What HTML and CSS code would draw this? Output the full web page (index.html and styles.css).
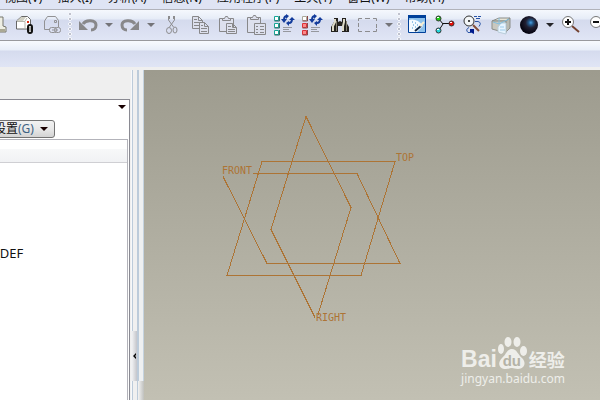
FILE: index.html
```html
<!DOCTYPE html>
<html lang="zh-CN">
<head>
<meta charset="utf-8">
<meta name="viewport" content="width=device-width, initial-scale=1">
<title>Datum planes</title>
<link rel="stylesheet" href="styles.css">
</head>
<body>
<nav class="menubar">
  <button type="button">视图(V)</button>
  <button type="button">插入(I)</button>
  <button type="button">分析(A)</button>
  <button type="button">信息(N)</button>
  <button type="button">应用程序(P)</button>
  <button type="button">工具(T)</button>
  <button type="button">窗口(W)</button>
  <button type="button">帮助(H)</button>
</nav>

<div class="toolbar" role="toolbar">
  <button type="button" class="tool" aria-label="打印">
    <svg viewBox="0 0 28 28"><path d="M10 15V6h10v9l3 1v5H8v-5z" fill="#eeeee4" stroke="#77776c"/><path d="M10 18h12v3H10z" fill="#aaa894"/></svg>
  </button>
  <button type="button" class="tool" aria-label="邮件">
    <svg viewBox="0 0 28 28"><path d="M5.500 10l5-4.500h6l3 3V18h-14z" fill="#fff" stroke="#666"/><path d="M6 10l4-4h5l-3 4z" fill="#d0d0c4"/><path d="M6 10.500h8V18M14 10l2-3" fill="none" stroke="#b5b5ac"/><path d="M16 10h2v2h-2z" fill="#d83018"/><rect x="17" y="14" width="4" height="8" rx="2" fill="#fff" stroke="#111" stroke-width="2"/><path d="M19 16v4" stroke="#555"/></svg>
  </button>
  <button type="button" class="tool" aria-label="链接">
    <svg viewBox="0 0 28 28" fill="none" stroke="#929294"><path d="M11 18.500H5.500V10l3-4.500h8l3 4V16M15.500 9.500h2v2h-2z"/><rect x="10.500" y="16.500" width="7" height="5" rx="2"/><rect x="15.500" y="16.500" width="6" height="5" rx="2"/><path d="M13 19h6"/></svg>
  </button>
  <span class="grip"></span>
  <button type="button" class="tool" aria-label="撤消">
    <svg viewBox="0 0 28 28"><path d="M9 13c3-5 13-4 13 1 0 3-2 5-5 5" fill="none" stroke="#88888a" stroke-width="3"/><path d="M5 10v9h9z" fill="#88888a"/></svg>
  </button>
  <button type="button" class="drop" aria-label="撤消列表"><svg viewBox="0 0 14 28"><path d="M3 12h8l-4 4z" fill="#747478"/></svg></button>
  <button type="button" class="tool" aria-label="重做">
    <svg viewBox="0 0 28 28"><path d="M19 13c-3-5-13-4-13 1 0 3 2 5 5 5" fill="none" stroke="#88888a" stroke-width="3"/><path d="M23 10v9h-9z" fill="#88888a"/></svg>
  </button>
  <button type="button" class="drop" aria-label="重做列表"><svg viewBox="0 0 14 28"><path d="M3 12h8l-4 4z" fill="#747478"/></svg></button>
  <button type="button" class="tool" aria-label="剪切">
    <svg viewBox="0 0 28 28" fill="none" stroke="#8c8c8e"><path d="M10.500 5v4l5 7M16.500 5v4l-5 7M11.500 5v3M15.500 5v3"/><ellipse cx="11" cy="19.500" rx="2.500" ry="3"/><ellipse cx="17" cy="19" rx="2" ry="3"/></svg>
  </button>
  <button type="button" class="tool" aria-label="复制">
    <svg viewBox="0 0 28 28" fill="#dde0ed" stroke="#88888a"><path d="M6.500 5.500h6l4 4v8h-10zM12.500 5.500v4h4M8 8.500h3M8 11.500h7M8 14.500h7"/><path d="M13.500 11.500h5l4 4v7h-9zM18.500 11.500v4h4M15 14.500h2M15 17.500h6M15 20.500h6"/></svg>
  </button>
  <button type="button" class="tool" aria-label="粘贴">
    <svg viewBox="0 0 28 28" fill="#dde0ed" stroke="#88888a"><path d="M5.500 7.500h14v13h-14z"/><path d="M8.500 9.500v-2h2l1-2h2l1 2h2v2z"/><path d="M12.500 12.500h6l4 4v6h-10zM18.500 12.500v4h4M14 15.500h3M14 18.500h7M14 20.500h7"/></svg>
  </button>
  <button type="button" class="tool" aria-label="选择性粘贴">
    <svg viewBox="0 0 28 28" fill="#dde0ed" stroke="#88888a"><path d="M5.500 6.500h13v15h-13z"/><path d="M8.500 8.500v-2h2l1-2h2l1 2h2v2z"/><path d="M12.500 12.500h11v11h-11z"/><path d="M14 15.500h2M18 15.500h4M14 18.500h2M18 18.500h4M14 21.500h2M18 21.500h4"/></svg>
  </button>
  <button type="button" class="tool" aria-label="再生">
    <svg viewBox="0 0 28 28"><g fill="#fff" stroke="#16a596"><path d="M4.500 5.500h4v4h-4zM4.500 12.500h4v4h-4zM4.500 19.500h4v4h-4z"/></g><path d="M9.500 5v5h-5M9.500 12v5h-5M9.500 19v5h-5" fill="none" stroke="#336b66"/><g fill="none" stroke="#123b9b" stroke-width="2"><path d="M17 5q-3 0-3 4M22 8q0 4-3 4"/></g><path d="M16 3l3 2-3 3zM19 10v5l-3-3zM11 8h6l-3 4zM19 9l3-3 3 3z" fill="#123b9b"/><path d="M13 16.500h9M13 18.500h6M13 20.500h8" stroke="#96989e"/></svg>
  </button>
  <button type="button" class="tool" aria-label="再生管理器">
    <svg viewBox="0 0 28 28"><path d="M4.500 5.500h4v4h-4z" fill="#fff" stroke="#aaa89a"/><g fill="#fa8a8a" stroke="#dc3038"><path d="M4.500 12.500h4v4h-4zM4.500 19.500h4v4h-4z"/></g><path d="M9.500 5v5h-5M9.500 12v5h-5M9.500 19v5h-5" fill="none" stroke="#8a4648"/><g fill="none" stroke="#123b9b" stroke-width="2"><path d="M17 5q-3 0-3 4M22 8q0 4-3 4"/></g><path d="M16 3l3 2-3 3zM19 10v5l-3-3zM11 8h6l-3 4zM19 9l3-3 3 3z" fill="#123b9b"/><path d="M13 16.500h9M13 18.500h6M13 20.500h8" stroke="#96989e"/></svg>
  </button>
  <button type="button" class="tool" aria-label="查找">
    <svg viewBox="0 0 28 28"><path d="M8 7h4v4l2-1 2 1V7h4v4l3 5v5h-7v-6h-4v6H5v-5l3-5z" fill="#24221e"/><path d="M9 8v3l-2 4v5M18 8v3l-1 4v5" fill="none" stroke="#dedbc9" stroke-width="2"/><path d="M10.500 10v10M20.500 10v10" stroke="#858171"/></svg>
  </button>
  <button type="button" class="tool" aria-label="选取框">
    <svg viewBox="0 0 28 28" fill="none" stroke="#8c8c8e"><path d="M4.500 10V7.500H8M11 7.500h5M19 7.500h3.500V10M22.500 13v4M22.500 18v2.500H19M16 20.500h-5M8 20.500H4.500V18M4.500 16v-4"/></svg>
  </button>
  <button type="button" class="drop" aria-label="选取列表"><svg viewBox="0 0 14 28"><path d="M3 12h8l-4 4z" fill="#747478"/></svg></button>
  <span class="grip"></span>
  <button type="button" class="tool" aria-label="重画">
    <svg viewBox="0 0 28 28"><path d="M5.500 4.500h17v17h-17z" fill="#8cc1ec" stroke="#00409a"/><path d="M5 4h18v3H5z" fill="#00409a"/><path d="M6 9q8-2 14 6l-6 6H6z" fill="#f5faff"/><path d="M9 11h1M12 12h1M10 14h1M14 14h1M9 17h1M12 16h1" stroke="#3a90d0"/><path d="M12 20l6-5" stroke="#102746" stroke-width="2"/><path d="M17 15l4-4" stroke="#f8eed0" stroke-width="2"/></svg>
  </button>
  <button type="button" class="tool" aria-label="旋转中心">
    <svg viewBox="0 0 28 28"><path d="M8 8l4 5-4 6M12 12.500h9" fill="none" stroke="#111"/><g stroke="#333"><circle cx="7.500" cy="7.500" r="2.500" fill="#20d018"/><circle cx="20.500" cy="12.500" r="2.500" fill="#e70e08"/><circle cx="7.500" cy="19.500" r="2.500" fill="#25d7dc"/></g><path d="M6 6.500h2M19 11.500h2M6 18.500h2" stroke="#fff"/></svg>
  </button>
  <button type="button" class="tool" aria-label="定向模式">
    <svg viewBox="0 0 28 28"><path d="M14 14l6 6" stroke="#855039" stroke-width="2"/><circle cx="10" cy="10" r="5" fill="#f4f7f8" stroke="#333"/><path d="M9 10h2M10 9v2" stroke="#111"/><g fill="none" stroke="#2853a5"><path d="M15 5.500h3M19 5.500h3M17 7.500h4M16 10.500h3q4 1 1 5"/><path d="M10 16.500q-4 2-1 5h3"/></g><path d="M11 18h4v5l-4-2z" fill="#001b8c"/></svg>
  </button>
  <button type="button" class="tool" aria-label="视图管理器">
    <svg viewBox="0 0 28 28" stroke="#8b8e89"><path d="M5 10l7-3h11l-4 3z" fill="#e7e4d6"/><path d="M5 10h14v12l-7-2-7-2z" fill="#c9c8bf"/><path d="M19 10l4-3v10l-4 4z" fill="#b9bab2"/><path d="M11 16l3-4h5v11l-8-2z" fill="#e6f4ff" stroke="#b9cdda"/><path d="M6 11l6 2v-6M12 13l10-5" fill="none" stroke="#82bfe0"/><path d="M13 16h4M13 19h5" stroke="#9bcae9"/></svg>
  </button>
  <button type="button" class="tool" aria-label="外观库">
    <svg viewBox="0 0 28 28"><defs><radialGradient id="sphere" cx=".6" cy=".37" r=".6"><stop stop-color="#48a0e4"/><stop offset=".22" stop-color="#235585"/><stop offset=".48" stop-color="#211f32"/><stop offset="1" stop-color="#050410"/></radialGradient></defs><circle cx="14" cy="14" r="9" fill="url(#sphere)"/></svg>
  </button>
  <button type="button" class="drop" aria-label="外观列表"><svg viewBox="0 0 14 28"><path d="M3 12h8l-4 4z" fill="#252529"/></svg></button>
  <button type="button" class="tool" aria-label="放大">
    <svg viewBox="0 0 28 28"><path d="M15 15l7 6" stroke="#74422f" stroke-width="2"/><circle cx="11" cy="11" r="5.500" fill="#fff" stroke="#777"/><path d="M8 11h6M11 8v6" stroke="#111" stroke-width="2"/></svg>
  </button>
  <button type="button" class="tool" aria-label="缩小">
    <svg viewBox="0 0 28 28"><path d="M15 15l7 6" stroke="#74422f" stroke-width="2"/><circle cx="11" cy="11" r="5.500" fill="#fff" stroke="#777"/><path d="M8 11h6" stroke="#111" stroke-width="2"/></svg>
  </button>
</div>
<div class="subbar"></div>

<main class="workspace">
  <aside class="navigator">
    <div class="pane">
      <button type="button" class="pane-menu" aria-label="导航器选项"><svg class="caret" viewBox="0 0 8 4"><path d="M0 0h8l-4 4z"/></svg></button>
      <button type="button" class="settings"><span>设置<span class="key">(G)</span></span><svg class="caret" viewBox="0 0 8 4"><path d="M0 0h8l-4 4z"/></svg></button>
      <div class="tree">
        <div class="tree-head"></div>
        <div class="tree-item">_DEF</div>
      </div>
    </div>
  </aside>
  <div class="splitter">
    <div class="rail"></div>
    <button type="button" class="handle" aria-label="折叠导航器"><svg viewBox="0 0 4 6"><path d="M3 0v2L2 3l1 1v2L0 3z"/></svg></button>
    <div class="rail rail-end"></div>
  </div>
  <section class="canvas">
    <svg class="planes">
      <path d="M118 91.500H251L217 205.500H83z"/>
      <path d="M79 106.500L123 193.500H256L213 103.500H109"/>
      <path d="M171 247.500L127 159.500L162 46.500L207 137.500L174 244.500"/>
      <text x="78" y="104">FRONT</text>
      <text x="252" y="91">TOP</text>
      <text x="172" y="251">RIGHT</text>
    </svg>
    <div class="watermark">
      <div class="brand">
        <span class="latin">Bai</span>
        <span class="paw"><svg viewBox="0 0 30 34"><ellipse cx="4" cy="13" rx="3" ry="5"/><ellipse cx="11" cy="6" rx="3.500" ry="5"/><ellipse cx="20" cy="6" rx="3.500" ry="5"/><ellipse cx="26.500" cy="15" rx="3.500" ry="5"/><path d="M15 13c5 0 6 6 10 9 5 5 2 11-4 11-3 0-4-1-6-1s-3 1-6 1c-7 0-9-6-4-11 4-3 5-9 10-9z"/></svg><span class="du">du</span></span>
        <span class="cjk">经验</span>
      </div>
      <div class="site">jingyan.baidu.com</div>
    </div>
  </section>
</main>
</body>
</html>
```
FILE: styles.css
```css
* {
  box-sizing: border-box;
}

body {
  display: flex;
  flex-direction: column;
  height: 100vh;
  margin: 0;
  overflow: hidden;
  background: #efefef;
  color: #111;
  font: 12px/16px "Noto Sans", "Noto Sans CJK SC", sans-serif;
}

button {
  flex: none;
  margin: 0;
  padding: 0;
  border: 0;
  background: none;
  color: inherit;
  font: inherit;
}

svg {
  display: block;
}

.menubar {
  display: flex;
  flex: none;
  align-items: flex-end;
  gap: 15px;
  height: 9px;
  padding: 0 4px 3px;
  background: #dfe4f4;
}

.menubar button {
  white-space: nowrap;
}

.toolbar {
  display: flex;
  flex: none;
  height: 32px;
  padding-top: 1px;
  border-top: 1px solid #b1b2ba;
  border-bottom: 1px solid #98999d;
  background: linear-gradient(#f5f8fd, #e6ecf7 9px, #d4daed 10px, #e0e5f5);
}

.toolbar > :first-child {
  margin-left: -17px;
}

.tool,
.tool svg {
  width: 28px;
  height: 28px;
}

.drop,
.drop svg {
  width: 14px;
  height: 28px;
}

.grip {
  flex: none;
  width: 7px;
  background: radial-gradient(circle at 3px 3px, #bfc2ce 1px, #f4f6fb 1px 2px, transparent 2px) 0 0 / 7px 5px;
}

.subbar {
  flex: none;
  height: 26px;
  background: linear-gradient(#f7fafe, #e8eef8 9px, #d5dbee 10px, #e0e5f5);
}

.workspace {
  display: flex;
  flex: 1;
  min-height: 0;
  padding-top: 3px;
}

.navigator {
  flex: none;
  width: 131px;
  padding: 29px 1px 0 0;
}

.pane {
  display: flex;
  flex-direction: column;
  align-items: flex-start;
  height: 100%;
  border: solid #8a8a92;
  border-width: 1px 1px 0 0;
  background: #fff;
}

.caret {
  width: 8px;
  height: 4px;
  fill: #180000;
}

.pane-menu {
  align-self: flex-end;
  padding: 5px 3px 11px;
}

.settings {
  display: flex;
  align-items: center;
  gap: 6px;
  height: 18px;
  margin-left: -7px;
  padding: 0 6px 0 0;
  border: 1px solid #737373;
  border-radius: 0 3px 3px 0;
  background: linear-gradient(#f2f2f2, #e8e8e8 50%, #d3d3d3);
}

.key {
  color: #3d6284;
}

.tree {
  align-self: stretch;
  flex: 1;
  margin: 1px 1px 0 0;
  padding-top: 9px;
  border: solid #b3b3ba;
  border-width: 1px 1px 0 0;
}

.tree-head {
  height: 14px;
  border-bottom: 1px solid #cfcfd3;
  background: linear-gradient(#f7f8f9, #f1f2f4);
}

.tree-item {
  margin: 82px 0 0 -6px;
  font-size: 13px;
}

.splitter {
  display: flex;
  flex: none;
  flex-direction: column;
  width: 13px;
}

.rail {
  flex: 261;
  background: linear-gradient(90deg, #f6f8fa 1px, #bccbda 1px 2px, #f0f0f0 2px 6px, #bccbda 6px 8px, #eef0f1 8px 12px, #c5d3df 12px);
}

.rail-end {
  flex: 19;
  background: linear-gradient(90deg, #f6f8fa 1px, #bccbda 1px 2px, #f0f0f0 2px 6px, #bccbda 6px 7px, #f3f3f3 7px, #bfc0bd);
}

.handle {
  display: flex;
  align-items: center;
  height: 50px;
  padding-left: 2px;
  background: linear-gradient(90deg, #eff0f2 1px, #c4c5ca 6px, #bccbda 6px 8px, #eef0f1 8px 12px, #c5d3df 12px);
}

.handle svg {
  width: 4px;
  height: 6px;
}

.canvas {
  position: relative;
  flex: 1;
  background: linear-gradient(#9d9b8e, #c2c0b3);
}

.planes {
  width: 100%;
  height: 100%;
}

.planes path {
  fill: none;
  stroke: #ad7435;
  shape-rendering: crispEdges;
}

.planes text {
  fill: #ad7435;
  font: 10px "DejaVu Sans Mono", monospace;
}

.watermark {
  position: absolute;
  right: 35px;
  bottom: 13px;
  color: #eeeeea;
}

.brand {
  display: flex;
  align-items: flex-end;
  height: 34px;
}

.latin {
  font: bold 23px/22px "Liberation Sans", sans-serif;
}

.paw {
  position: relative;
}

.paw svg {
  width: 30px;
  height: 34px;
  fill: #eeeeea;
}

.du {
  position: absolute;
  inset: auto 0 2px;
  color: #b4b2a6;
  font: bold 15px/15px "Liberation Sans", sans-serif;
  text-align: center;
}

.cjk {
  margin-left: 2px;
  font: bold 18px/22px "Noto Sans CJK SC", sans-serif;
}

.site {
  margin-top: 1px;
  font: 12px/16px "Noto Sans", sans-serif;
}
```
